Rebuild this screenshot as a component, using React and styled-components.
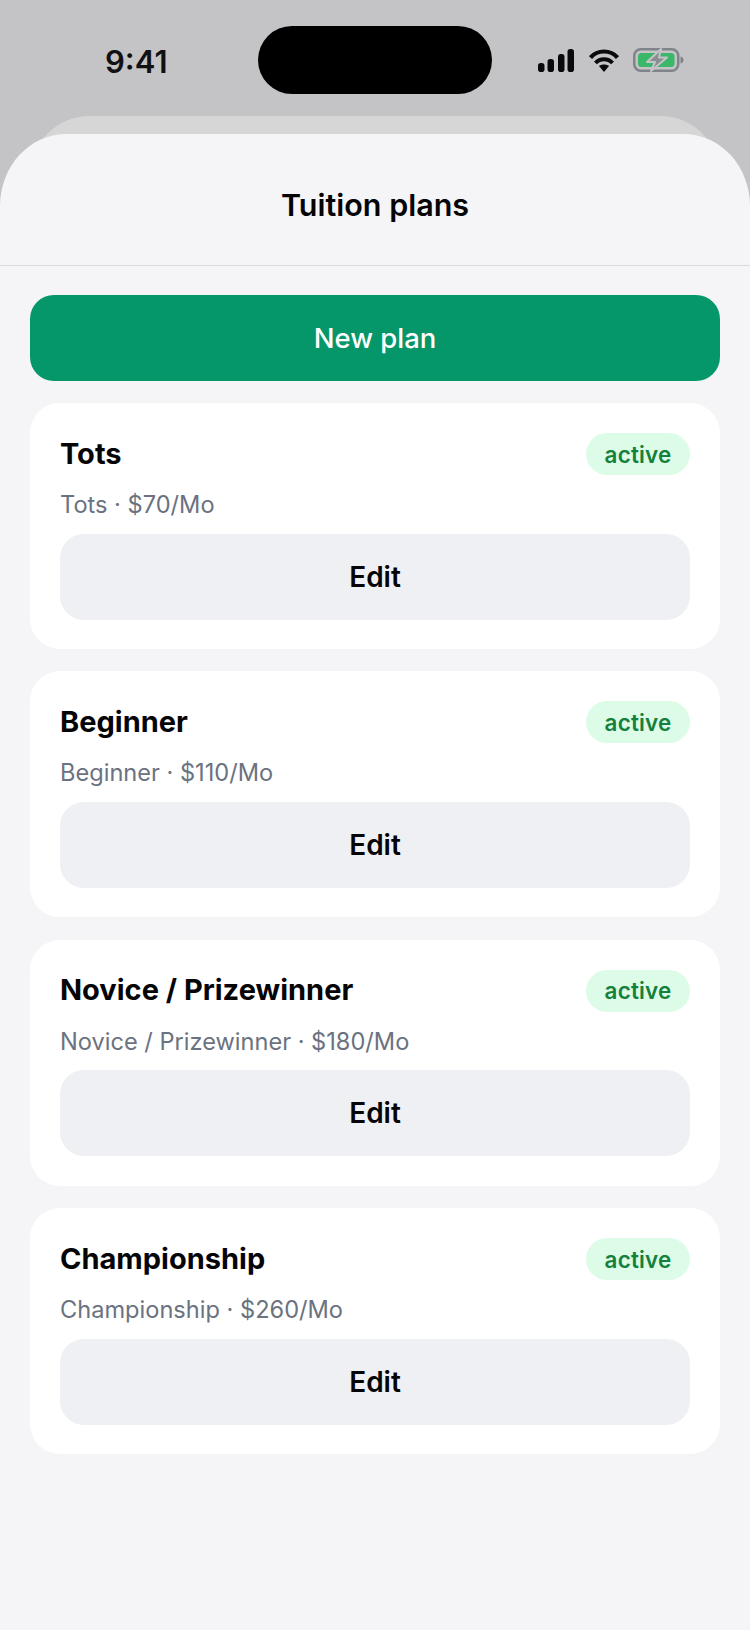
import React from "react";
import styled, { createGlobalStyle } from "styled-components";

const GlobalStyle = createGlobalStyle`
  html, body {
    margin: 0;
    padding: 0;
    background: #f5f5f8;
  }
  * {
    box-sizing: border-box;
  }
`;

const plans = [
  { name: "Tots", price: "$70/Mo" },
  { name: "Beginner", price: "$110/Mo" },
  { name: "Novice / Prizewinner", price: "$180/Mo" },
  { name: "Championship", price: "$260/Mo" },
];

const Screen = styled.div`
  width: 750px;
  height: 1630px;
  overflow: hidden;
  background: #c4c4c6;
  font-family: Inter, "Liberation Sans", sans-serif;
  color: #050507;
`;

const StatusBar = styled.div`
  height: 116px;
  padding-top: 26px;
  display: grid;
  grid-template-columns: 1fr 234px 1fr;
  align-items: start;
`;

const Clock = styled.div`
  margin: 18px 0 0 105px;
  font-size: 31px;
  line-height: 36px;
  font-weight: 600;
  color: #111113;
`;

const Island = styled.div`
  height: 68px;
  border-radius: 34px;
  background: #000;
`;

const StatusIcons = styled.div`
  display: flex;
  justify-content: flex-end;
  align-items: flex-end;
  gap: 14.5px;
  height: 24px;
  margin-top: 22px;
  padding-right: 66px;
`;

const BackSheet = styled.div`
  height: 70px;
  margin: 0 30px -52px;
  border-radius: 60px 60px 0 0;
  background: #d6d6d7;
`;

const Sheet = styled.div`
  position: relative;
  height: 1496px;
  border-radius: 66px 66px 0 0 / 72px 72px 0 0;
  background: #f5f5f8;
`;

const Header = styled.div`
  height: 132px;
  padding-top: 10px;
  display: flex;
  align-items: center;
  justify-content: center;
  border-bottom: 1px solid #d9d9de;
  font-size: 30.5px;
  font-weight: 600;
`;

const Content = styled.div`
  padding: 28.5px 30px 0;
  display: flex;
  flex-direction: column;
  gap: 22.6px;
`;

const Button = styled.button`
  display: block;
  width: 100%;
  height: 86px;
  padding: 0;
  border: 0;
  border-radius: 24px;
  font-family: inherit;
  background: ${(p) => (p.$primary ? "#059669" : "#eff0f4")};
  color: ${(p) => (p.$primary ? "#fff" : "#050507")};
  font-size: ${(p) => (p.$primary ? "27.5px" : "28px")};
  font-weight: ${(p) => (p.$primary ? 500 : 600)};
`;

const Card = styled.div`
  height: 245.8px;
  padding: 30px;
  border-radius: 30px;
  background: #fff;
`;

const CardTop = styled.div`
  display: flex;
  justify-content: space-between;
  align-items: center;
  height: 42px;
`;

const Name = styled.div`
  margin-top: -2px;
  font-size: 29px;
  font-weight: 700;
`;

const Badge = styled.span`
  display: flex;
  align-items: center;
  justify-content: center;
  width: 104px;
  height: 42px;
  border-radius: 21px;
  background: #dcfce7;
  color: #15803d;
  font-size: 22.4px;
  font-weight: 600;
  letter-spacing: 0.2px;
`;

const Detail = styled.div`
  margin: 14px 0 12.6px;
  font-size: 23.6px;
  line-height: 32px;
  color: #6b7280;
`;

const SignalIcon = () => (
  <svg width="36" height="23" viewBox="0 0 36 23">
    <rect x="0" y="14" width="6.5" height="9" rx="2.8" fill="#0a0a0c" />
    <rect x="9.5" y="10" width="6.5" height="13" rx="2.8" fill="#0a0a0c" />
    <rect x="20" y="5" width="6.5" height="18" rx="2.8" fill="#0a0a0c" />
    <rect x="29.500" y="0" width="6.5" height="23" rx="2.8" fill="#0a0a0c" />
  </svg>
);

const WifiIcon = () => (
  <svg width="30" height="23" viewBox="0 0 30 23" fill="none">
    <path d="M1.500 8.500C8.500 0.500 21.500 0.500 28.500 8.500" stroke="#0a0a0c" strokeWidth="4.200" />
    <path d="M6.500 14C11 9 19 9 23.500 14" stroke="#0a0a0c" strokeWidth="4" />
    <path d="M15 23L10 17C12.500 15 17.500 15 20 17Z" fill="#0a0a0c" />
  </svg>
);

const BatteryIcon = () => (
  <svg width="51" height="24" viewBox="0 0 51 24" fill="none">
    <rect x="1.250" y="1.250" width="44" height="21.500" rx="6.500" stroke="#80848a" strokeWidth="2.500" />
    <rect x="5" y="5" width="36.500" height="14" rx="3.500" fill="#3bb76a" />
    <path d="M47.500 8.500C49.800 9 50.500 10.500 50.500 12C50.500 13.500 49.800 15 47.500 15.500Z" fill="#80848a" />
    <path d="M28 1L14 14H22L18 23L34 9.500H26Z" fill="#8a8d92" stroke="#c4c4c6" strokeWidth="2" strokeLinejoin="round" />
  </svg>
);

export default function App() {
  return (
    <Screen>
      <GlobalStyle />
      <StatusBar>
        <Clock>9:41</Clock>
        <Island />
        <StatusIcons>
          <SignalIcon />
          <WifiIcon />
          <BatteryIcon />
        </StatusIcons>
      </StatusBar>
      <BackSheet />
      <Sheet>
        <Header>Tuition plans</Header>
        <Content>
          <Button $primary>New plan</Button>
          {plans.map((plan) => (
            <Card key={plan.name}>
              <CardTop>
                <Name>{plan.name}</Name>
                <Badge>active</Badge>
              </CardTop>
              <Detail>
                {plan.name} · {plan.price}
              </Detail>
              <Button>Edit</Button>
            </Card>
          ))}
        </Content>
      </Sheet>
    </Screen>
  );
}
